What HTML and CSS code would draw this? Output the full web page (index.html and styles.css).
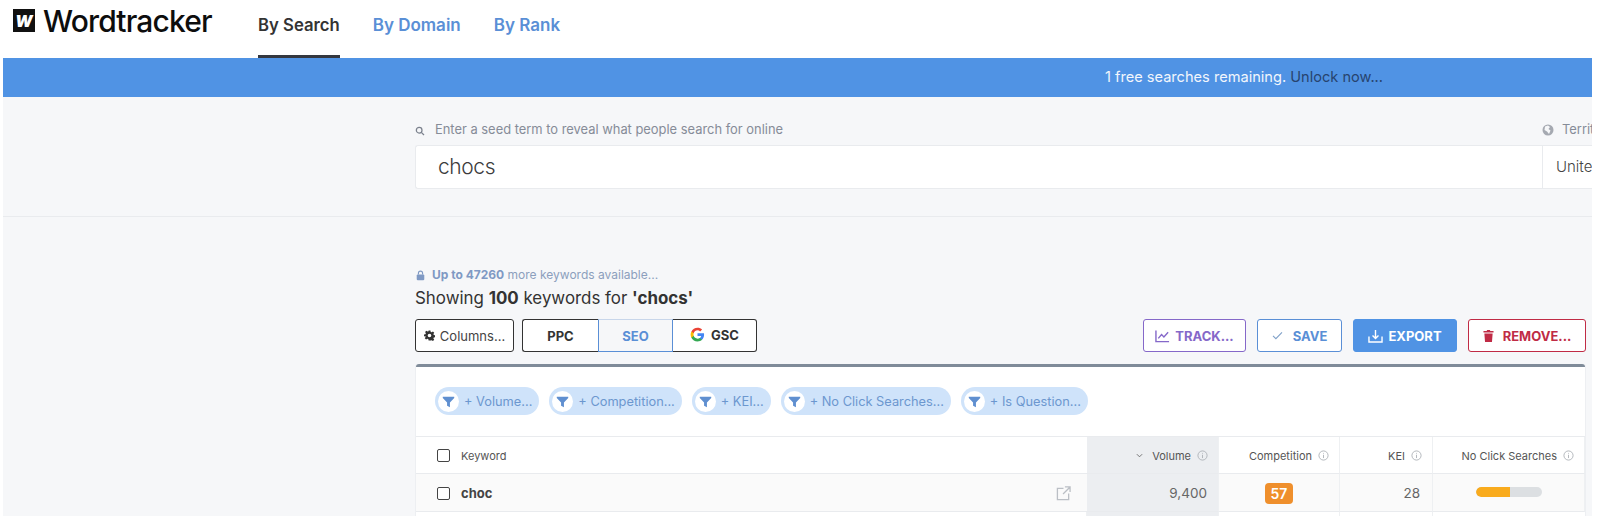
FILE: index.html
```html
<!DOCTYPE html>
<html lang="en">
<head>
<meta charset="utf-8">
<title>Wordtracker</title>
<link rel="stylesheet" href="styles.css">
</head>
<body>
<div class="page">
  <header class="topbar">
    <div class="logo">
      <span class="logo-mark"><span>W</span></span>
      <span class="logo-text">Wordtracker</span>
    </div>
    <nav class="tabs">
      <a class="tab tab-active">By Search</a>
      <a class="tab">By Domain</a>
      <a class="tab">By Rank</a>
    </nav>
  </header>
  <div class="notice"><span>1 free searches remaining.</span> <a>Unlock now...</a></div>
  <section class="search">
    <div class="search-grid">
      <label class="field-label">
        <svg class="ico-search" viewBox="0 0 12 12"><circle cx="5" cy="5" r="3.4"/><path d="M7.6 7.6 10.8 10.8"/></svg>
        Enter a seed term to reveal what people search for online
      </label>
      <label class="field-label territory-label">
        <svg class="ico-globe" viewBox="0 0 12 12"><circle cx="6" cy="6" r="5.5"/><path class="land" d="M3 2.5 6 1.5 8 3 6.5 5 8.5 6.5 7 10 5 7.5 2.5 6z"/></svg>
        Territory
      </label>
      <div class="seed">chocs</div>
      <div class="territory">United Kingdom</div>
    </div>
  </section>
  <main class="results">
    <p class="more">
      <svg class="ico-lock" viewBox="0 0 10 12"><path class="shackle" d="M2.7 5V3.4a2.3 2.3 0 0 1 4.6 0V5"/><rect x="0.8" y="4.8" width="8.4" height="6.6" rx="1.2"/></svg>
      <span><b>Up to 47260</b> more keywords available...</span>
    </p>
    <h1 class="showing">Showing <b>100</b> keywords for <b>'chocs'</b></h1>
    <div class="toolbar">
      <button class="btn-columns">
        <svg class="ico-gear" viewBox="0 0 24 24"><path d="M10 1h4l.7 3.2 2 .9L19.500 3.300l2.800 2.800-1.800 2.800.9 2 3.200.7v4l-3.200.7-.9 2 1.800 2.800-2.800 2.800-2.800-1.800-2 .9L14 23h-4l-.7-3.200-2-.9-2.800 1.800-2.800-2.800 1.800-2.800-.9-2L0 14v-4l3.200-.7.9-2L2.300 4.500l2.800-2.800 2.800 1.800 2-.9zM12 8a4 4 0 1 0 0 8 4 4 0 0 0 0-8z" fill-rule="evenodd"/></svg>
        Columns...
      </button>
      <div class="segments">
        <button class="seg seg-ppc">PPC</button>
        <button class="seg seg-seo">SEO</button>
        <button class="seg seg-gsc">
          <svg class="ico-g" viewBox="0 0 48 48"><path fill="#4285F4" d="M45 24.500c0-1.600-.1-3.100-.4-4.500H24v8.500h11.800c-.5 2.700-2 5-4.400 6.600v5.500h7.100c4.100-3.800 6.500-9.400 6.500-16.100z"/><path fill="#34A853" d="M24 46c5.900 0 10.900-2 14.500-5.300l-7.100-5.500c-2 1.300-4.500 2.100-7.400 2.100-5.700 0-10.500-3.800-12.200-9H4.500v5.700C8.100 41.100 15.500 46 24 46z"/><path fill="#FBBC05" d="M11.800 28.300c-.4-1.300-.7-2.800-.7-4.300s.3-3 .7-4.300V14H4.500C3 17 2 20.400 2 24s1 7 2.500 10z"/><path fill="#EA4335" d="M24 10.700c3.200 0 6.100 1.100 8.400 3.300l6.300-6.300C34.900 4.200 29.900 2 24 2 15.500 2 8.100 6.900 4.500 14l7.300 5.700c1.700-5.200 6.500-9 12.200-9z"/></svg>
          <span class="gsc-label">GSC</span>
        </button>
      </div>
      <div class="actions">
        <button class="act act-track">
          <svg class="ico-act" viewBox="0 0 16 14"><path d="M1 1v12h14M3.500 9.500 7 5.500l2.500 2.500L14 3"/></svg>
          TRACK...
        </button>
        <button class="act act-save">
          <svg class="ico-check" viewBox="0 0 12 10"><path d="M1 5.500 4.200 8.500 11 1.500"/></svg>
          SAVE
        </button>
        <button class="act act-export">
          <svg class="ico-act" viewBox="0 0 16 15"><path d="M8 1v9M4.800 7 8 10.200 11.200 7M1 8v6h14V8"/></svg>
          EXPORT
        </button>
        <button class="act act-remove">
          <svg class="ico-trash" viewBox="0 0 12 14"><path d="M4.500 1h3l.5 1H11.500v1.800H.5V2H4zM1.500 4.800h9L9.800 14H2.200z"/></svg>
          REMOVE...
        </button>
      </div>
    </div>
    <section class="card">
      <div class="filters">
        <span class="chip"><svg class="ico-funnel" viewBox="0 0 22 22"><circle cx="11" cy="11" r="11"/><path d="M5 6h12v1.300L12.500 12v5l-3-1.500V12L5 7.300z"/></svg>+ Volume...</span>
        <span class="chip"><svg class="ico-funnel" viewBox="0 0 22 22"><circle cx="11" cy="11" r="11"/><path d="M5 6h12v1.300L12.500 12v5l-3-1.500V12L5 7.300z"/></svg>+ Competition...</span>
        <span class="chip"><svg class="ico-funnel" viewBox="0 0 22 22"><circle cx="11" cy="11" r="11"/><path d="M5 6h12v1.300L12.500 12v5l-3-1.500V12L5 7.300z"/></svg>+ KEI...</span>
        <span class="chip"><svg class="ico-funnel" viewBox="0 0 22 22"><circle cx="11" cy="11" r="11"/><path d="M5 6h12v1.300L12.500 12v5l-3-1.500V12L5 7.300z"/></svg>+ No Click Searches...</span>
        <span class="chip"><svg class="ico-funnel" viewBox="0 0 22 22"><circle cx="11" cy="11" r="11"/><path d="M5 6h12v1.300L12.500 12v5l-3-1.500V12L5 7.300z"/></svg>+ Is Question...</span>
      </div>
      <div class="table">
        <div class="cell head kw"><span class="check"></span>Keyword</div>
        <div class="cell head num sorted"><svg class="ico-chev" viewBox="0 0 8 5"><path d="M1 1l3 3 3-3"/></svg>Volume<svg class="ico-info" viewBox="0 0 12 12"><circle cx="6" cy="6" r="5"/><path d="M6 3.200v.8M6 5.200v3.600"/></svg></div>
        <div class="cell head num">Competition<svg class="ico-info" viewBox="0 0 12 12"><circle cx="6" cy="6" r="5"/><path d="M6 3.200v.8M6 5.200v3.600"/></svg></div>
        <div class="cell head num">KEI<svg class="ico-info" viewBox="0 0 12 12"><circle cx="6" cy="6" r="5"/><path d="M6 3.200v.8M6 5.200v3.600"/></svg></div>
        <div class="cell head num">No Click Searches<svg class="ico-info" viewBox="0 0 12 12"><circle cx="6" cy="6" r="5"/><path d="M6 3.200v.8M6 5.200v3.600"/></svg></div>

        <div class="cell row kw"><span class="check"></span><b>choc</b><svg class="ico-ext" viewBox="0 0 16 16"><path d="M8 2.500H1.500v12h12V8M9.500 1H15v5.500M15 1 7.500 8.500"/></svg></div>
        <div class="cell row val sorted">9,400</div>
        <div class="cell row mid"><span class="badge">57</span></div>
        <div class="cell row val">28</div>
        <div class="cell row mid"><span class="bar"><span class="bar-fill" style="width:53%"></span></span></div>

        <div class="cell tail"></div>
        <div class="cell tail sorted"></div>
        <div class="cell tail"></div>
        <div class="cell tail"></div>
        <div class="cell tail"></div>
      </div>
    </section>
  </main>
</div>
</body>
</html>
```
FILE: styles.css
```css
* { box-sizing: border-box; }
html, body { margin: 0; padding: 0; background: #fff; }
body { height: 527px; overflow: hidden; font-family: "Inter", "Liberation Sans", sans-serif; color: #333; }
.page { margin-left: 3px; width: 1589px; height: 516px; overflow: hidden; background: #f6f7f9; }

.topbar { height: 58px; background: #fff; display: flex; align-items: stretch; padding-left: 10px; }
.logo { display: flex; align-items: flex-start; gap: 8px; padding-top: 4px; width: 245px; }
.logo-mark { width: 22px; height: 23px; margin-top: 5px; background: #111; display: flex; align-items: center; justify-content: center; }
.logo-mark span { color: #fff; font: italic 900 16px/1 "Inter", sans-serif; }
.logo-text { font: 500 30px/34px "Inter", sans-serif; letter-spacing: -0.850px; color: #0d0d0d; }
.tabs { display: flex; gap: 33px; }
.tab { font-size: 17px; font-weight: 600; line-height: 51px; color: #5a8fd6; border-bottom: 3px solid transparent; height: 58px; }
.tab-active { font-size: 16.700px; color: #333; border-bottom-color: #34373f; }

.notice { height: 39px; background: #5093e4; padding-left: 1102px; font-size: 14.600px; line-height: 39px; color: #f2f6fc; white-space: nowrap; }
.notice a { color: #27446f; }

.search { height: 120px; border-bottom: 1px solid #e9ebee; padding: 21px 0 0 412px; }
.search-grid { display: grid; grid-template-columns: 1127px 200px; grid-template-rows: 27px 44px; }
.field-label { display: flex; align-items: center; gap: 10px; font-size: 12.900px; color: #868c98; white-space: nowrap; padding-bottom: 4px; }
.ico-search { width: 10px; height: 10px; fill: none; stroke: #7b818d; stroke-width: 1.500; margin-top: 3px; }
.ico-globe { width: 12px; height: 12px; }
.ico-globe circle { fill: #a5a9b1; }
.ico-globe .land { fill: #f6f7f9; }
.territory-label { gap: 8px; }
.seed { background: #fff; border: 1px solid #e9ebee; border-right: 0; border-radius: 3px 0 0 3px; padding-left: 22px; font-size: 21px; letter-spacing: -0.400px; line-height: 42px; font-weight: 300; color: #3c3c3c; }
.territory { background: #fff; border: 1px solid #e9ebee; padding-left: 13px; font-size: 15px; line-height: 42px; color: #444; white-space: nowrap; font-weight: 300; }

.results { padding: 49px 0 0 412px; width: 1583px; }
.more { margin: 0; height: 18px; font-size: 12px; line-height: 18px; color: #8c9fbd; display: flex; align-items: center; white-space: pre; }
.more b { color: #7f99c4; font-weight: 700; }
.ico-lock { width: 9px; height: 11px; margin: 0 7px 0 1px; fill: #7f99c4; }
.ico-lock .shackle { fill: none; stroke: #7f99c4; stroke-width: 1.300; }
.showing { margin: 2px 0 0; font-size: 16.900px; line-height: 24px; font-weight: 400; color: #333; }
.showing b { font-weight: 700; }

.toolbar { display: flex; margin-top: 9px; height: 33px; }
button { font-family: inherit; margin: 0; cursor: pointer; }
.btn-columns { width: 99px; background: #fff; border: 1px solid #333; border-radius: 3px; font-size: 13px; color: #444; display: flex; align-items: center; justify-content: center; gap: 5px; padding: 0; }
.ico-gear { width: 11px; height: 11px; fill: #333; }
.segments { display: flex; margin-left: 8px; }
.seg { height: 33px; background: #fff; border: 1px solid #333; font-size: 13px; font-weight: 700; color: #333; padding: 0; display: flex; align-items: center; justify-content: center; }
.seg-ppc { width: 76px; border-radius: 3px 0 0 3px; border-right: 0; }
.seg-seo { width: 75px; background: #f6f7f9; border-color: #5a8fd6; color: #5a8fd6; border-top-color: #c8d6ea; }
.seg-gsc { width: 84px; border-radius: 0 3px 3px 0; border-left: 0; gap: 6px; }
.gsc-label { margin-top: -2px; }
.ico-g { width: 15px; height: 15px; margin-top: -2px; }
.actions { display: flex; gap: 11px; margin-left: auto; }
.act { height: 33px; border: 1px solid; border-radius: 3px; background: #fff; font-size: 13px; font-weight: 700; padding: 0; display: flex; align-items: center; justify-content: center; gap: 5px; }
.act-track { width: 103px; color: #8568c9; border-color: #8568c9; }
.act-save { width: 85px; color: #5a8fd6; border-color: #5a8fd6; gap: 10px; }
.act-export { width: 104px; color: #fff; background: #5093e4; border-color: #5093e4; }
.act-remove { width: 118px; color: #c02b45; border-color: #c02b45; gap: 9px; }
.ico-act { width: 15px; height: 14px; fill: none; stroke: currentColor; stroke-width: 1.500; }
.ico-check { width: 11px; height: 9px; fill: none; stroke: #7fa0c8; stroke-width: 1.200; }
.ico-trash { width: 11px; height: 13px; fill: currentColor; }

.card { margin-top: 12px; height: 200px; background: #fff; border-top: 3px solid #7f8b99; border-radius: 3px 3px 0 0; box-shadow: -1px 0 0 #edeff2, 1px 0 0 #edeff2; margin-left: 1px; width: 1169px; }
.filters { height: 70px; padding: 20px 0 0 19px; display: flex; gap: 10px; border-bottom: 1px solid #e9ebee; align-items: flex-start; }
.chip { height: 28px; padding: 0 7px 0 3px; border-radius: 14px; background: #cfe3fa; color: #6c97cf; font-size: 12.800px; display: flex; align-items: center; gap: 5px; white-space: nowrap; }
.ico-funnel { width: 21px; height: 21px; }
.ico-funnel circle { fill: #fff; }
.ico-funnel path { fill: #5f8fd0; }

.table { display: grid; grid-template-columns: 671px 132px 121px 93px 152px; grid-template-rows: 37px 38px 6px; }
.cell { border-bottom: 1px solid #e9ebee; display: flex; align-items: center; padding-top: 1px; }
.head { font-size: 11px; color: #555; }
.num { justify-content: flex-end; padding-right: 10px; gap: 6px; border-right: 1px solid #eef0f2; }
.num:last-child { border-right: 0; }
.kw { padding-left: 21px; }
.row { background: #fafafa; }
.row.kw { font-size: 13px; color: #444; }
.row.kw b { font-weight: 700; }
.check { width: 13px; height: 13px; border: 1px solid #444; border-radius: 2px; background: #fff; margin-right: 11px; flex: none; }
.sorted { background: #eceef1; }
.ico-chev { width: 7px; height: 5px; fill: none; stroke: #666; stroke-width: 1; margin-right: 3px; }
.ico-info { width: 11px; height: 11px; fill: none; stroke: #aeb2b8; stroke-width: 1; }
.ico-ext { width: 15px; height: 15px; margin-left: auto; margin-right: 16px; fill: none; stroke: #bbbfc5; stroke-width: 1.400; }
.val { justify-content: flex-end; padding-right: 12px; font-size: 13.500px; color: #666; border-right: 1px solid #eef0f2; }
.val.sorted { padding-right: 11px; }
.mid { justify-content: center; border-right: 1px solid #eef0f2; }
.row.mid:last-of-type { border-right: 0; }
.badge { width: 28px; height: 21px; border-radius: 4px; background: #ef8f2c; color: #fff; font-size: 14px; font-weight: 600; display: flex; align-items: center; justify-content: center; }
.bar { width: 66px; height: 10px; border-radius: 5px; background: #dcdfe2; overflow: hidden; display: block; margin-top: -3px; }
.bar-fill { display: block; height: 10px; background: #f9ab1d; border-radius: 5px 0 0 5px; }
.tail { border-bottom: 0; border-right: 1px solid #eef0f2; background: #fff; padding-top: 0; }
.tail.sorted { background: #eceef1; }
.tail:last-child { border-right: 0; }
```
